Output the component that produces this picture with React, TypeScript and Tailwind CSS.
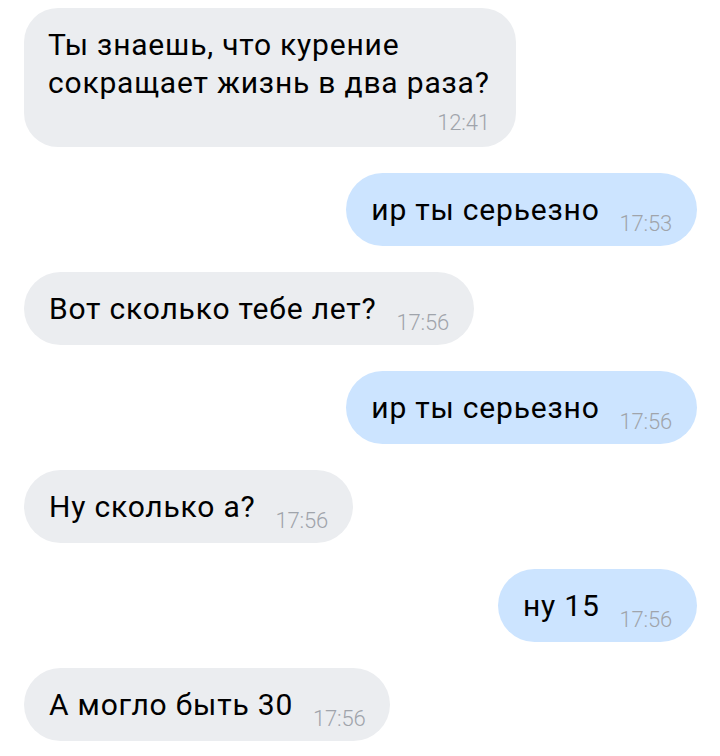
import React from "react";

type Msg = { text: React.ReactNode; time: string; out: boolean; multi?: boolean };

const msgs: Msg[] = [
  { text: <>Ты знаешь, что курение<br />сокращает жизнь в два раза?</>, time: "12:41", out: false, multi: true },
  { text: "ир ты серьезно", time: "17:53", out: true },
  { text: "Вот сколько тебе лет?", time: "17:56", out: false },
  { text: "ир ты серьезно", time: "17:56", out: true },
  { text: "Ну сколько а?", time: "17:56", out: false },
  { text: "ну 15", time: "17:56", out: true },
  { text: "А могло быть 30", time: "17:56", out: false },
];

function Time({ t, className = "" }: { t: string; className?: string }) {
  return (
    <span
      className={`text-[22px] leading-[22px] font-light tracking-[-0.2px] text-[#a0a4ab] whitespace-nowrap ${className}`}
    >
      {t}
    </span>
  );
}

export default function App() {
  return (
    <div
      className="w-[720px] h-[756px] bg-white overflow-hidden flex flex-col gap-[26px] pt-[8px] pl-[24px] pr-[23px]"
      style={{ fontFamily: "Roboto, 'Noto Sans', sans-serif" }}
    >
      {msgs.map((m, i) => (
        <div key={i} className={`flex ${m.out ? "justify-end" : "justify-start"}`}>
          {m.multi ? (
            <div className="bg-[#ebedf0] rounded-[34px] pt-[18px] pb-[13px] pl-[24px] pr-[26px] flex flex-col">
              <div className="text-[30px] leading-[38px] tracking-[0.8px] text-black whitespace-nowrap">{m.text}</div>
              <div className="flex justify-end mt-[10px]">
                <Time t={m.time} />
              </div>
            </div>
          ) : (
            <div
              className={`${m.out ? "bg-[#cce4ff]" : "bg-[#ebedf0]"} rounded-full pt-[18px] pb-[17px] pl-[25px] pr-[25px] flex items-end`}
            >
              <span className="text-[30px] leading-[38px] tracking-[0.8px] text-black whitespace-nowrap">{m.text}</span>
              <Time t={m.time} className="ml-[20px] -mb-[6px]" />
            </div>
          )}
        </div>
      ))}
    </div>
  );
}
